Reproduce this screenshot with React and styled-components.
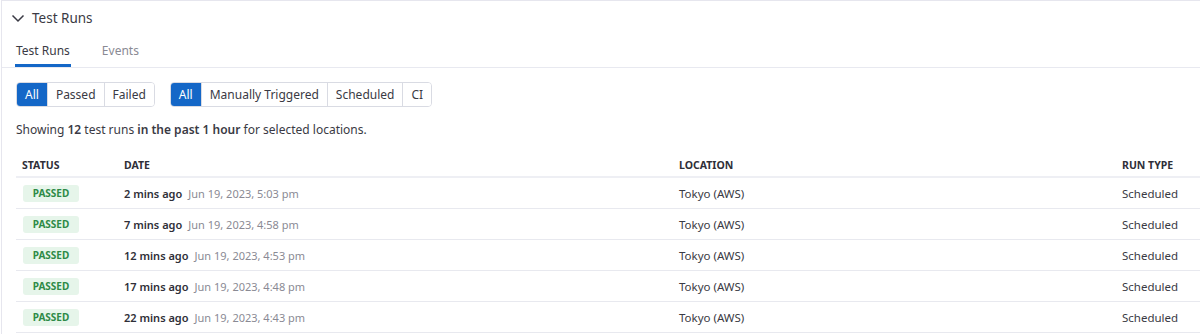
import styled, { createGlobalStyle } from "styled-components";

const GlobalStyle = createGlobalStyle`
  body {
    margin: 0;
    background: #fff;
    font-family: "Noto Sans", "Open Sans", sans-serif;
    color: #2f2f38;
  }
`;

const Panel = styled.section`
  margin-left: 1px;
  border-left: 1px solid #e6e6ee;
  border-top: 1px solid #e6e6ee;
  height: 333px;
  overflow: hidden;
`;

const Header = styled.div`
  display: flex;
  align-items: center;
  gap: 7px;
  height: 34px;
  padding-left: 9px;
  font-size: 13.5px;
  color: #3a3a44;
`;

const TabBar = styled.div`
  display: flex;
  gap: 30px;
  padding-left: 13px;
  border-bottom: 1px solid #e8e9f0;
  height: 32px;
`;

const Tab = styled.div`
  font-size: 12px;
  line-height: 29px;
  padding: 1px 1px 0;
  color: ${(p) => (p.$active ? "#3a3a44" : "#8a8a94")};
  border-bottom: 3px solid ${(p) => (p.$active ? "#1467c7" : "transparent")};
`;

const Filters = styled.div`
  display: flex;
  gap: 15px;
  padding: 14px 0 0 14px;
`;

const Group = styled.div`
  display: flex;
  border: 1px solid #d9dbe3;
  border-radius: 4px;
  overflow: hidden;
  height: 23px;
`;

const Seg = styled.button`
  font-family: inherit;
  font-size: 12px;
  padding: 0 8px;
  border: none;
  border-left: 1px solid #d9dbe3;
  background: ${(p) => (p.$active ? "#1467c7" : "#fff")};
  color: ${(p) => (p.$active ? "#fff" : "#3a3a44")};
  &:first-child {
    border-left: none;
  }
`;

const Summary = styled.p`
  margin: 14px 0 0 14px;
  font-size: 12px;
  line-height: 18px;
  color: #3a3a44;
  b {
    font-weight: 600;
  }
`;

const Table = styled.table`
  margin: 11px 0 0 14px;
  width: calc(100% - 14px);
  border-collapse: collapse;
  table-layout: fixed;
`;

const Th = styled.th`
  text-align: left;
  font-size: 10.5px;
  font-weight: 700;
  color: #2f2f38;
  padding: 4px 0 0 6px;
  height: 22px;
  border-bottom: 2px solid #eeeff4;
`;

const Td = styled.td`
  font-size: 11.5px;
  color: #3a3a44;
  padding: 0 0 0 6px;
  height: 30px;
  border-bottom: 1px solid #e8e9ef;
`;

const Badge = styled.span`
  display: inline-block;
  background: #e6f5ea;
  color: #2e8a47;
  font-size: 10px;
  font-weight: 700;
  line-height: 17px;
  width: 56px;
  text-align: center;
  border-radius: 3px;
  margin-left: 1px;
`;

const DateCell = styled.span`
  font-size: 11px;
`;

const Ago = styled.span`
  font-weight: 600;
  color: #2f2f38;
  margin-right: 6px;
`;

const Stamp = styled.span`
  color: #8a8a94;
`;

const runs = [
  ["2 mins ago", "Jun 19, 2023, 5:03 pm"],
  ["7 mins ago", "Jun 19, 2023, 4:58 pm"],
  ["12 mins ago", "Jun 19, 2023, 4:53 pm"],
  ["17 mins ago", "Jun 19, 2023, 4:48 pm"],
  ["22 mins ago", "Jun 19, 2023, 4:43 pm"],
];

export default function App() {
  return (
    <>
      <GlobalStyle />
      <Panel>
        <Header>
          <svg width="14" height="14" viewBox="0 0 14 14" fill="none">
            <path d="M1.5 4.5 L7 10 L12.5 4.5" stroke="#3a3a44" strokeWidth="1.5" />
          </svg>
          Test Runs
        </Header>
        <TabBar>
          <Tab $active>Test Runs</Tab>
          <Tab>Events</Tab>
        </TabBar>
        <Filters>
          <Group>
            <Seg $active>All</Seg>
            <Seg>Passed</Seg>
            <Seg>Failed</Seg>
          </Group>
          <Group>
            <Seg $active>All</Seg>
            <Seg>Manually Triggered</Seg>
            <Seg>Scheduled</Seg>
            <Seg>CI</Seg>
          </Group>
        </Filters>
        <Summary>
          Showing <b>12</b> test runs <b>in the past 1 hour</b> for selected locations.
        </Summary>
        <Table>
          <colgroup>
            <col style={{ width: 102 }} />
            <col style={{ width: 555 }} />
            <col style={{ width: 443 }} />
            <col />
          </colgroup>
          <thead>
            <tr>
              <Th>STATUS</Th>
              <Th>DATE</Th>
              <Th>LOCATION</Th>
              <Th>RUN TYPE</Th>
            </tr>
          </thead>
          <tbody>
            {runs.map(([ago, stamp]) => (
              <tr key={ago}>
                <Td>
                  <Badge>PASSED</Badge>
                </Td>
                <Td>
                  <DateCell>
                    <Ago>{ago}</Ago>
                    <Stamp>{stamp}</Stamp>
                  </DateCell>
                </Td>
                <Td>Tokyo (AWS)</Td>
                <Td>Scheduled</Td>
              </tr>
            ))}
          </tbody>
        </Table>
      </Panel>
    </>
  );
}
